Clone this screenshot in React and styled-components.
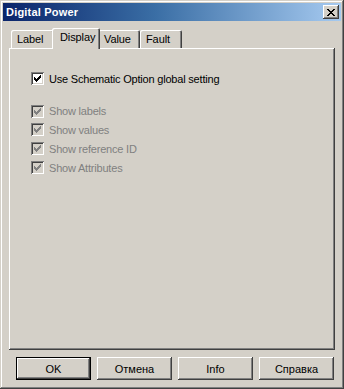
import React from 'react'
import styled, { createGlobalStyle, css } from 'styled-components'

const GlobalStyle = createGlobalStyle`
  html, body {
    margin: 0;
    padding: 0;
    background: #d4d0c8;
  }
  body {
    font-family: "Liberation Sans", Arial, sans-serif;
    font-size: 11px;
  }
`

const raised = css`
  box-shadow: inset -1px -1px #404040, inset 1px 1px #ffffff,
    inset -2px -2px #808080, inset 2px 2px #d4d0c8;
`

const Window = styled.div`
  box-sizing: border-box;
  width: 344px;
  height: 389px;
  padding: 3px 3px 4px 3px;
  background: #d4d0c8;
  display: flex;
  flex-direction: column;
  box-shadow: inset -1px -1px #404040, inset 1px 1px #d4d0c8,
    inset -2px -2px #808080, inset 2px 2px #ffffff;
`

const TitleBar = styled.div`
  height: 18px;
  display: flex;
  align-items: center;
  justify-content: space-between;
  padding: 0 2px 0 2px;
  background: linear-gradient(to right, #0a246a 0%, #3a6ea5 45%, #a6caf0 100%);
`

const Title = styled.span`
  color: #ffffff;
  font-weight: bold;
  font-size: 11px;
  padding-left: 1px;
  letter-spacing: 0.2px;
`

const CloseButton = styled.div`
  box-sizing: border-box;
  width: 16px;
  height: 14px;
  background: #d4d0c8;
  display: flex;
  align-items: center;
  justify-content: center;
  ${raised};
`

const Body = styled.div`
  flex: 1;
  display: flex;
  flex-direction: column;
  padding: 7px 6px 5px 6px;
`

const TabRow = styled.div`
  display: flex;
  align-items: flex-end;
  height: 20px;
  padding-left: 2px;
  position: relative;
  z-index: 1;
`

const Tab = styled.div`
  box-sizing: border-box;
  width: ${p => (p.active ? p.w + 4 : p.w)}px;
  height: ${p => (p.active ? 21 : 18)}px;
  margin: 0 ${p => (p.active ? -2 : 0)}px ${p => (p.active ? -1 : 0)}px;
  padding-left: ${p => (p.active ? 8 : 6)}px;
  padding-top: 3px;
  background: #d4d0c8;
  color: #000;
  letter-spacing: -0.1px;
  border-radius: 2px 2px 0 0;
  box-shadow: inset 1px 1px #ffffff, inset -1px 0 #404040, inset -2px 0 #808080;
  position: relative;
  z-index: ${p => (p.active ? 2 : 0)};
`

const Panel = styled.div`
  flex: 1;
  padding: 24px 0 0 22px;
  display: flex;
  flex-direction: column;
  box-shadow: inset -1px -1px #404040, inset 1px 1px #ffffff,
    inset -2px -2px #808080;
`

const Option = styled.label`
  display: flex;
  align-items: center;
  height: ${p => p.h || 19}px;
  letter-spacing: -0.2px;
  color: ${p => (p.disabled ? '#808080' : '#000')};
`

const Gap = styled.div`
  height: ${p => p.h}px;
`

const Box = styled.span`
  box-sizing: border-box;
  width: 13px;
  height: 13px;
  margin-right: 5px;
  display: inline-flex;
  align-items: center;
  justify-content: center;
  background: ${p => (p.disabled ? '#d4d0c8' : '#ffffff')};
  box-shadow: inset 1px 1px #808080, inset -1px -1px #ffffff,
    inset 2px 2px #404040, inset -2px -2px #d4d0c8;
`

const Buttons = styled.div`
  display: flex;
  justify-content: flex-end;
  gap: 6px;
  padding: 7px 1px 0 0;
`

const Button = styled.div`
  box-sizing: border-box;
  width: 75px;
  height: 23px;
  display: flex;
  align-items: center;
  justify-content: center;
  color: #000;
  background: #d4d0c8;
  ${p =>
    p.primary
      ? css`
          box-shadow: inset 0 0 0 1px #000000, inset -2px -2px #404040,
            inset 2px 2px #ffffff, inset -3px -3px #808080;
        `
      : raised};
`

const checkPath =
  'M0 2h1v3h-1z M1 3h1v3h-1z M2 4h1v3h-1z M3 3h1v3h-1z M4 2h1v3h-1z M5 1h1v3h-1z M6 0h1v3h-1z'

const Check = ({ color }) => (
  <svg width="7" height="7" viewBox="0 0 7 7" shapeRendering="crispEdges">
    <path d={checkPath} fill={color} />
  </svg>
)

const CheckBox = ({ label, disabled, h }) => (
  <Option disabled={disabled} h={h}>
    <Box disabled={disabled}>
      <Check color={disabled ? '#808080' : '#000'} />
    </Box>
    {label}
  </Option>
)

const CloseGlyph = () => (
  <svg width="8" height="7" viewBox="0 0 8 7" shapeRendering="crispEdges">
    <path
      d="M0 0h2v1h-2z M6 0h2v1h-2z M1 1h2v1h-2z M5 1h2v1h-2z M2 2h4v1h-4z M3 3h2v1h-2z M2 4h4v1h-4z M1 5h2v1h-2z M5 5h2v1h-2z M0 6h2v1h-2z M6 6h2v1h-2z"
      fill="#000"
    />
  </svg>
)

const tabs = [
  { name: 'Label', w: 43 },
  { name: 'Display', w: 44, active: true },
  { name: 'Value', w: 42 },
  { name: 'Fault', w: 42 },
]

const App = () => (
  <>
    <GlobalStyle />
    <Window>
      <TitleBar>
        <Title>Digital Power</Title>
        <CloseButton>
          <CloseGlyph />
        </CloseButton>
      </TitleBar>
      <Body>
        <TabRow>
          {tabs.map(t => (
            <Tab key={t.name} w={t.w} active={t.active}>
              {t.name}
            </Tab>
          ))}
        </TabRow>
        <Panel>
          <CheckBox label="Use Schematic Option global setting" h={13} />
          <Gap h={17} />
          <CheckBox label="Show labels" disabled h={18} />
          <CheckBox label="Show values" disabled h={19} />
          <CheckBox label="Show reference ID" disabled h={19} />
          <CheckBox label="Show Attributes" disabled h={19} />
        </Panel>
        <Buttons>
          <Button primary>OK</Button>
          <Button>Отмена</Button>
          <Button>Info</Button>
          <Button>Справка</Button>
        </Buttons>
      </Body>
    </Window>
  </>
)

export default App
